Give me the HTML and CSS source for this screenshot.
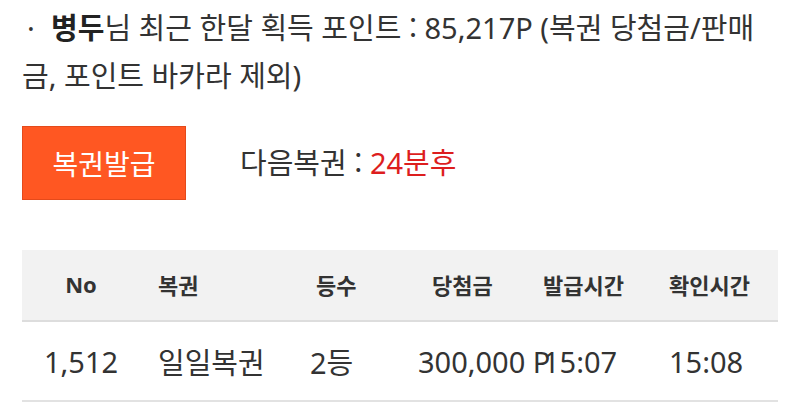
FILE: index.html
```html
<!DOCTYPE html>
<html lang="ko">
<head>
<meta charset="utf-8">
<link rel="stylesheet" href="styles.css">
</head>
<body>
<div class="page">
  <p class="info"><span class="dot">·</span><b>병두</b>님 최근 한달 획득 포인트 <span class="colon">:</span> 85,217P (복권 당첨금/판매<br>금, 포인트 바카라 제외)</p>
  <div class="issue-row">
    <button class="issue-btn">복권발급</button>
    <div class="next">다음복권 <span class="colon">:</span> <span class="red">24분후</span></div>
  </div>
  <div class="table">
    <div class="tr head">
      <div class="c1">No</div>
      <div class="c2">복권</div>
      <div class="c3">등수</div>
      <div class="c4">당첨금</div>
      <div class="c5">발급시간</div>
      <div class="c6">확인시간</div>
    </div>
    <div class="tr body">
      <div class="c1">1,512</div>
      <div class="c2">일일복권</div>
      <div class="c3">2등</div>
      <div class="c4">300,000 P</div>
      <div class="c5">15:07</div>
      <div class="c6">15:08</div>
    </div>
  </div>
</div>
</body>
</html>
```

FILE: styles.css
```css
html, body {
  margin: 0;
  padding: 0;
  background: #ffffff;
}
body {
  font-family: "Noto Sans", "Noto Sans CJK KR", sans-serif;
  color: #333333;
}
.page {
  padding: 4px 22px 0 22px;
  width: 756px;
}
.info {
  margin: 0;
  font-size: 29px;
  line-height: 48px;
  height: 96px;
  white-space: nowrap;
}
.dot {
  display: inline-block;
  margin-left: 5px;
  width: 24px;
}
.colon {
  font-family: "Noto Sans CJK KR", sans-serif;
  line-height: 1;
}
.info b {
  font-weight: 700;
  color: #222;
}
.issue-row {
  display: flex;
  align-items: center;
  margin-top: 26px;
  height: 74px;
}
.issue-btn {
  width: 164px;
  height: 74px;
  background: #ff5722;
  border: 1px solid #e44a1b;
  color: #ffffff;
  font-family: inherit;
  font-size: 28px;
  padding: 0;
  margin: 0;
}
.next {
  margin-left: 54px;
  font-size: 29px;
  line-height: 40px;
  color: #333;
}
.red {
  color: #dd1e1e;
}
.table {
  margin-top: 50px;
}
.tr {
  display: grid;
  grid-template-columns: 118px 170px 108px 125px 126px 109px;
  align-items: center;
  white-space: nowrap;
}
.tr.head {
  height: 72px;
  background: #f2f2f2;
  border-bottom: 2px solid #dddddd;
  font-size: 22px;
  font-weight: 700;
  color: #333;
  padding-bottom: 2px;
  box-sizing: border-box;
}
.tr.body {
  height: 78px;
  border-bottom: 2px solid #e2e2e2;
  font-size: 29px;
  color: #333;
}
.c1 { text-align: center; }
.c2 { padding-left: 18px; }
.c3 { padding-left: 0; }
.head .c3 { padding-left: 6px; }
.head .c4 { padding-left: 14px; }
.c5, .c6 { padding-left: 0; }
```
